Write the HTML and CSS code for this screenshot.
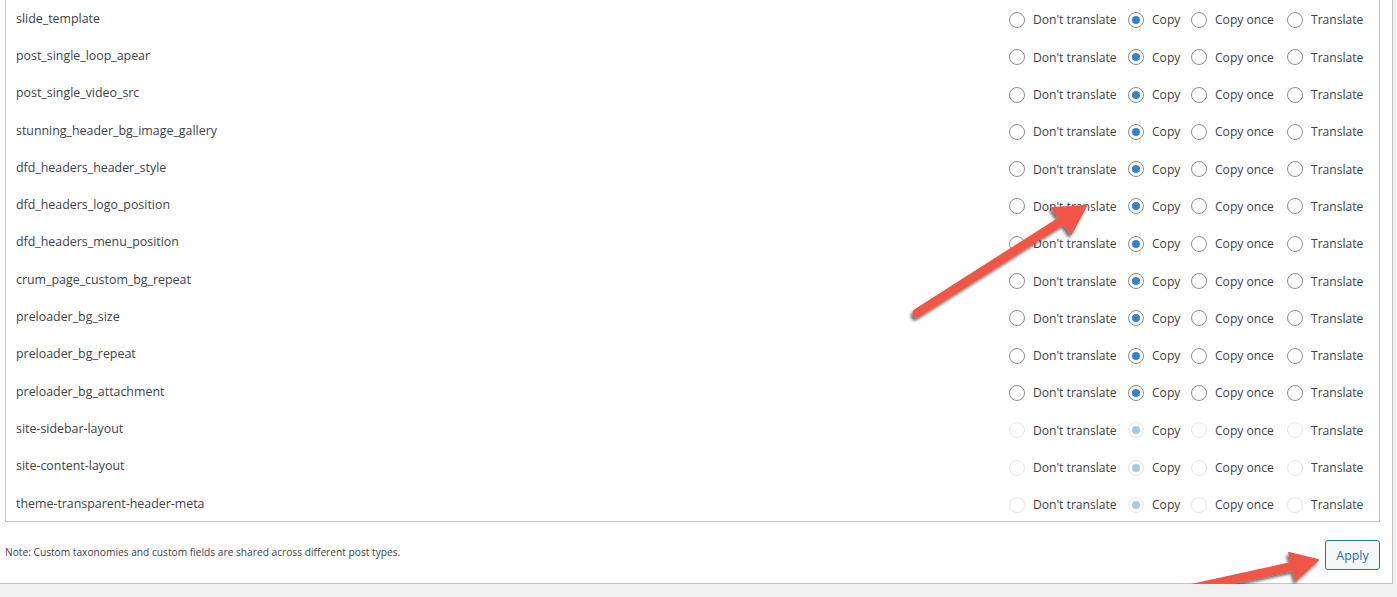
FILE: index.html
```html
<!DOCTYPE html>
<html>
<head>
	<meta charset="utf-8">
	<title>Custom fields translation</title>
	<link rel="stylesheet" href="styles.css">
</head>
<body>
<div class="panel">
	<div class="fields">
		<div class="row"><span class="name">slide_template</span>
			<div class="opts"><label><i class="radio"></i>Don't translate</label><label><i class="radio on"></i>Copy</label><label><i class="radio"></i>Copy once</label><label><i class="radio"></i>Translate</label></div></div>
		<div class="row"><span class="name">post_single_loop_apear</span>
			<div class="opts"><label><i class="radio"></i>Don't translate</label><label><i class="radio on"></i>Copy</label><label><i class="radio"></i>Copy once</label><label><i class="radio"></i>Translate</label></div></div>
		<div class="row"><span class="name">post_single_video_src</span>
			<div class="opts"><label><i class="radio"></i>Don't translate</label><label><i class="radio on"></i>Copy</label><label><i class="radio"></i>Copy once</label><label><i class="radio"></i>Translate</label></div></div>
		<div class="row"><span class="name">stunning_header_bg_image_gallery</span>
			<div class="opts"><label><i class="radio"></i>Don't translate</label><label><i class="radio on"></i>Copy</label><label><i class="radio"></i>Copy once</label><label><i class="radio"></i>Translate</label></div></div>
		<div class="row"><span class="name">dfd_headers_header_style</span>
			<div class="opts"><label><i class="radio"></i>Don't translate</label><label><i class="radio on"></i>Copy</label><label><i class="radio"></i>Copy once</label><label><i class="radio"></i>Translate</label></div></div>
		<div class="row"><span class="name">dfd_headers_logo_position</span>
			<div class="opts"><label><i class="radio"></i>Don't translate</label><label><i class="radio on"></i>Copy</label><label><i class="radio"></i>Copy once</label><label><i class="radio"></i>Translate</label></div></div>
		<div class="row"><span class="name">dfd_headers_menu_position</span>
			<div class="opts"><label><i class="radio"></i>Don't translate</label><label><i class="radio on"></i>Copy</label><label><i class="radio"></i>Copy once</label><label><i class="radio"></i>Translate</label></div></div>
		<div class="row"><span class="name">crum_page_custom_bg_repeat</span>
			<div class="opts"><label><i class="radio"></i>Don't translate</label><label><i class="radio on"></i>Copy</label><label><i class="radio"></i>Copy once</label><label><i class="radio"></i>Translate</label></div></div>
		<div class="row"><span class="name">preloader_bg_size</span>
			<div class="opts"><label><i class="radio"></i>Don't translate</label><label><i class="radio on"></i>Copy</label><label><i class="radio"></i>Copy once</label><label><i class="radio"></i>Translate</label></div></div>
		<div class="row"><span class="name">preloader_bg_repeat</span>
			<div class="opts"><label><i class="radio"></i>Don't translate</label><label><i class="radio on"></i>Copy</label><label><i class="radio"></i>Copy once</label><label><i class="radio"></i>Translate</label></div></div>
		<div class="row"><span class="name">preloader_bg_attachment</span>
			<div class="opts"><label><i class="radio"></i>Don't translate</label><label><i class="radio on"></i>Copy</label><label><i class="radio"></i>Copy once</label><label><i class="radio"></i>Translate</label></div></div>
		<div class="row disabled"><span class="name">site-sidebar-layout</span>
			<div class="opts"><label><i class="radio"></i>Don't translate</label><label><i class="radio on"></i>Copy</label><label><i class="radio"></i>Copy once</label><label><i class="radio"></i>Translate</label></div></div>
		<div class="row disabled"><span class="name">site-content-layout</span>
			<div class="opts"><label><i class="radio"></i>Don't translate</label><label><i class="radio on"></i>Copy</label><label><i class="radio"></i>Copy once</label><label><i class="radio"></i>Translate</label></div></div>
		<div class="row disabled"><span class="name">theme-transparent-header-meta</span>
			<div class="opts"><label><i class="radio"></i>Don't translate</label><label><i class="radio on"></i>Copy</label><label><i class="radio"></i>Copy once</label><label><i class="radio"></i>Translate</label></div></div>
	</div>
	<div class="footer">
		<p class="note">Note: Custom taxonomies and custom fields are shared across different post types.</p>
		<button class="apply">Apply</button>
	</div>
</div>

<!-- annotation arrows drawn over the screenshot -->
<svg class="arrows" width="1397" height="597" viewBox="0 0 1397 597">
	<defs>
		<filter id="shadow" x="-20%" y="-20%" width="140%" height="140%">
			<feDropShadow dx="-2" dy="3" stdDeviation="1.6" flood-color="#000" flood-opacity="0.55"/>
		</filter>
	</defs>
	<g filter="url(#shadow)" fill="#f05545" stroke="#f05545">
		<line x1="917" y1="313" x2="1063" y2="220" stroke-width="9" stroke-linecap="round"/>
		<polygon points="1086,206 1071,234 1052,208" stroke-width="2" stroke-linejoin="round"/>
		<line x1="1185" y1="590" x2="1294" y2="566" stroke-width="9" stroke-linecap="round"/>
		<polygon points="1318,560 1296,580 1289,553" stroke-width="2" stroke-linejoin="round"/>
	</g>
</svg>
</body>
</html>
```

FILE: styles.css
```css
body {
	margin: 0;
	background: #f0f0f1;
	font-family: "Open Sans", "Noto Sans", sans-serif;
	color: #3c434a;
	position: relative;
}
.panel {
	width: 1375px;
	padding: 0 12px 0 5px;
	background: #fff;
	border-right: 1px solid #c3c4c7;
	border-bottom: 1px solid #c3c4c7;
}
.fields {
	margin-top: -1px;
	border: 1px solid #c3c4c7;
	border-top: 0;
}
.row {
	height: 37.3px;
	display: flex;
	align-items: center;
	justify-content: space-between;
	padding: 0 0 0 10px;
	font-size: 12.4px;
}
.name {
	margin-top: 1px;
}
.opts {
	display: grid;
	grid-template-columns: 119px 63px 96px 74px;
	margin-right: 18px;
	margin-top: 4.7px;
	font-size: 12.1px;
}
.opts label {
	display: flex;
	align-items: center;
	gap: 8px;
	white-space: nowrap;
}
.radio {
	box-sizing: border-box;
	width: 16px;
	height: 16px;
	border: 1px solid #8c8f94;
	border-radius: 50%;
	display: flex;
	align-items: center;
	justify-content: center;
	flex: none;
}
.radio.on::after {
	content: "";
	width: 8px;
	height: 8px;
	border-radius: 50%;
	background: #3582c4;
}
.disabled .radio {
	border-color: #e4e5e7;
}
.disabled .radio.on::after {
	background: #a7c8e6;
}
.footer {
	display: flex;
	justify-content: space-between;
	align-items: center;
	height: 61px;
}
.note {
	margin: 0 0 2px 0;
	font-size: 10.2px;
}
.apply {
	width: 55px;
	height: 30px;
	margin-top: 5px;
	border: 1px solid #2271b1;
	border-radius: 3px;
	background: #f6f7f7;
	color: #2271b1;
	font-family: "Open Sans", "Noto Sans", sans-serif;
	font-size: 12.4px;
	padding: 0;
}
.arrows {
	position: absolute;
	left: 0;
	top: 0;
	pointer-events: none;
}
```
